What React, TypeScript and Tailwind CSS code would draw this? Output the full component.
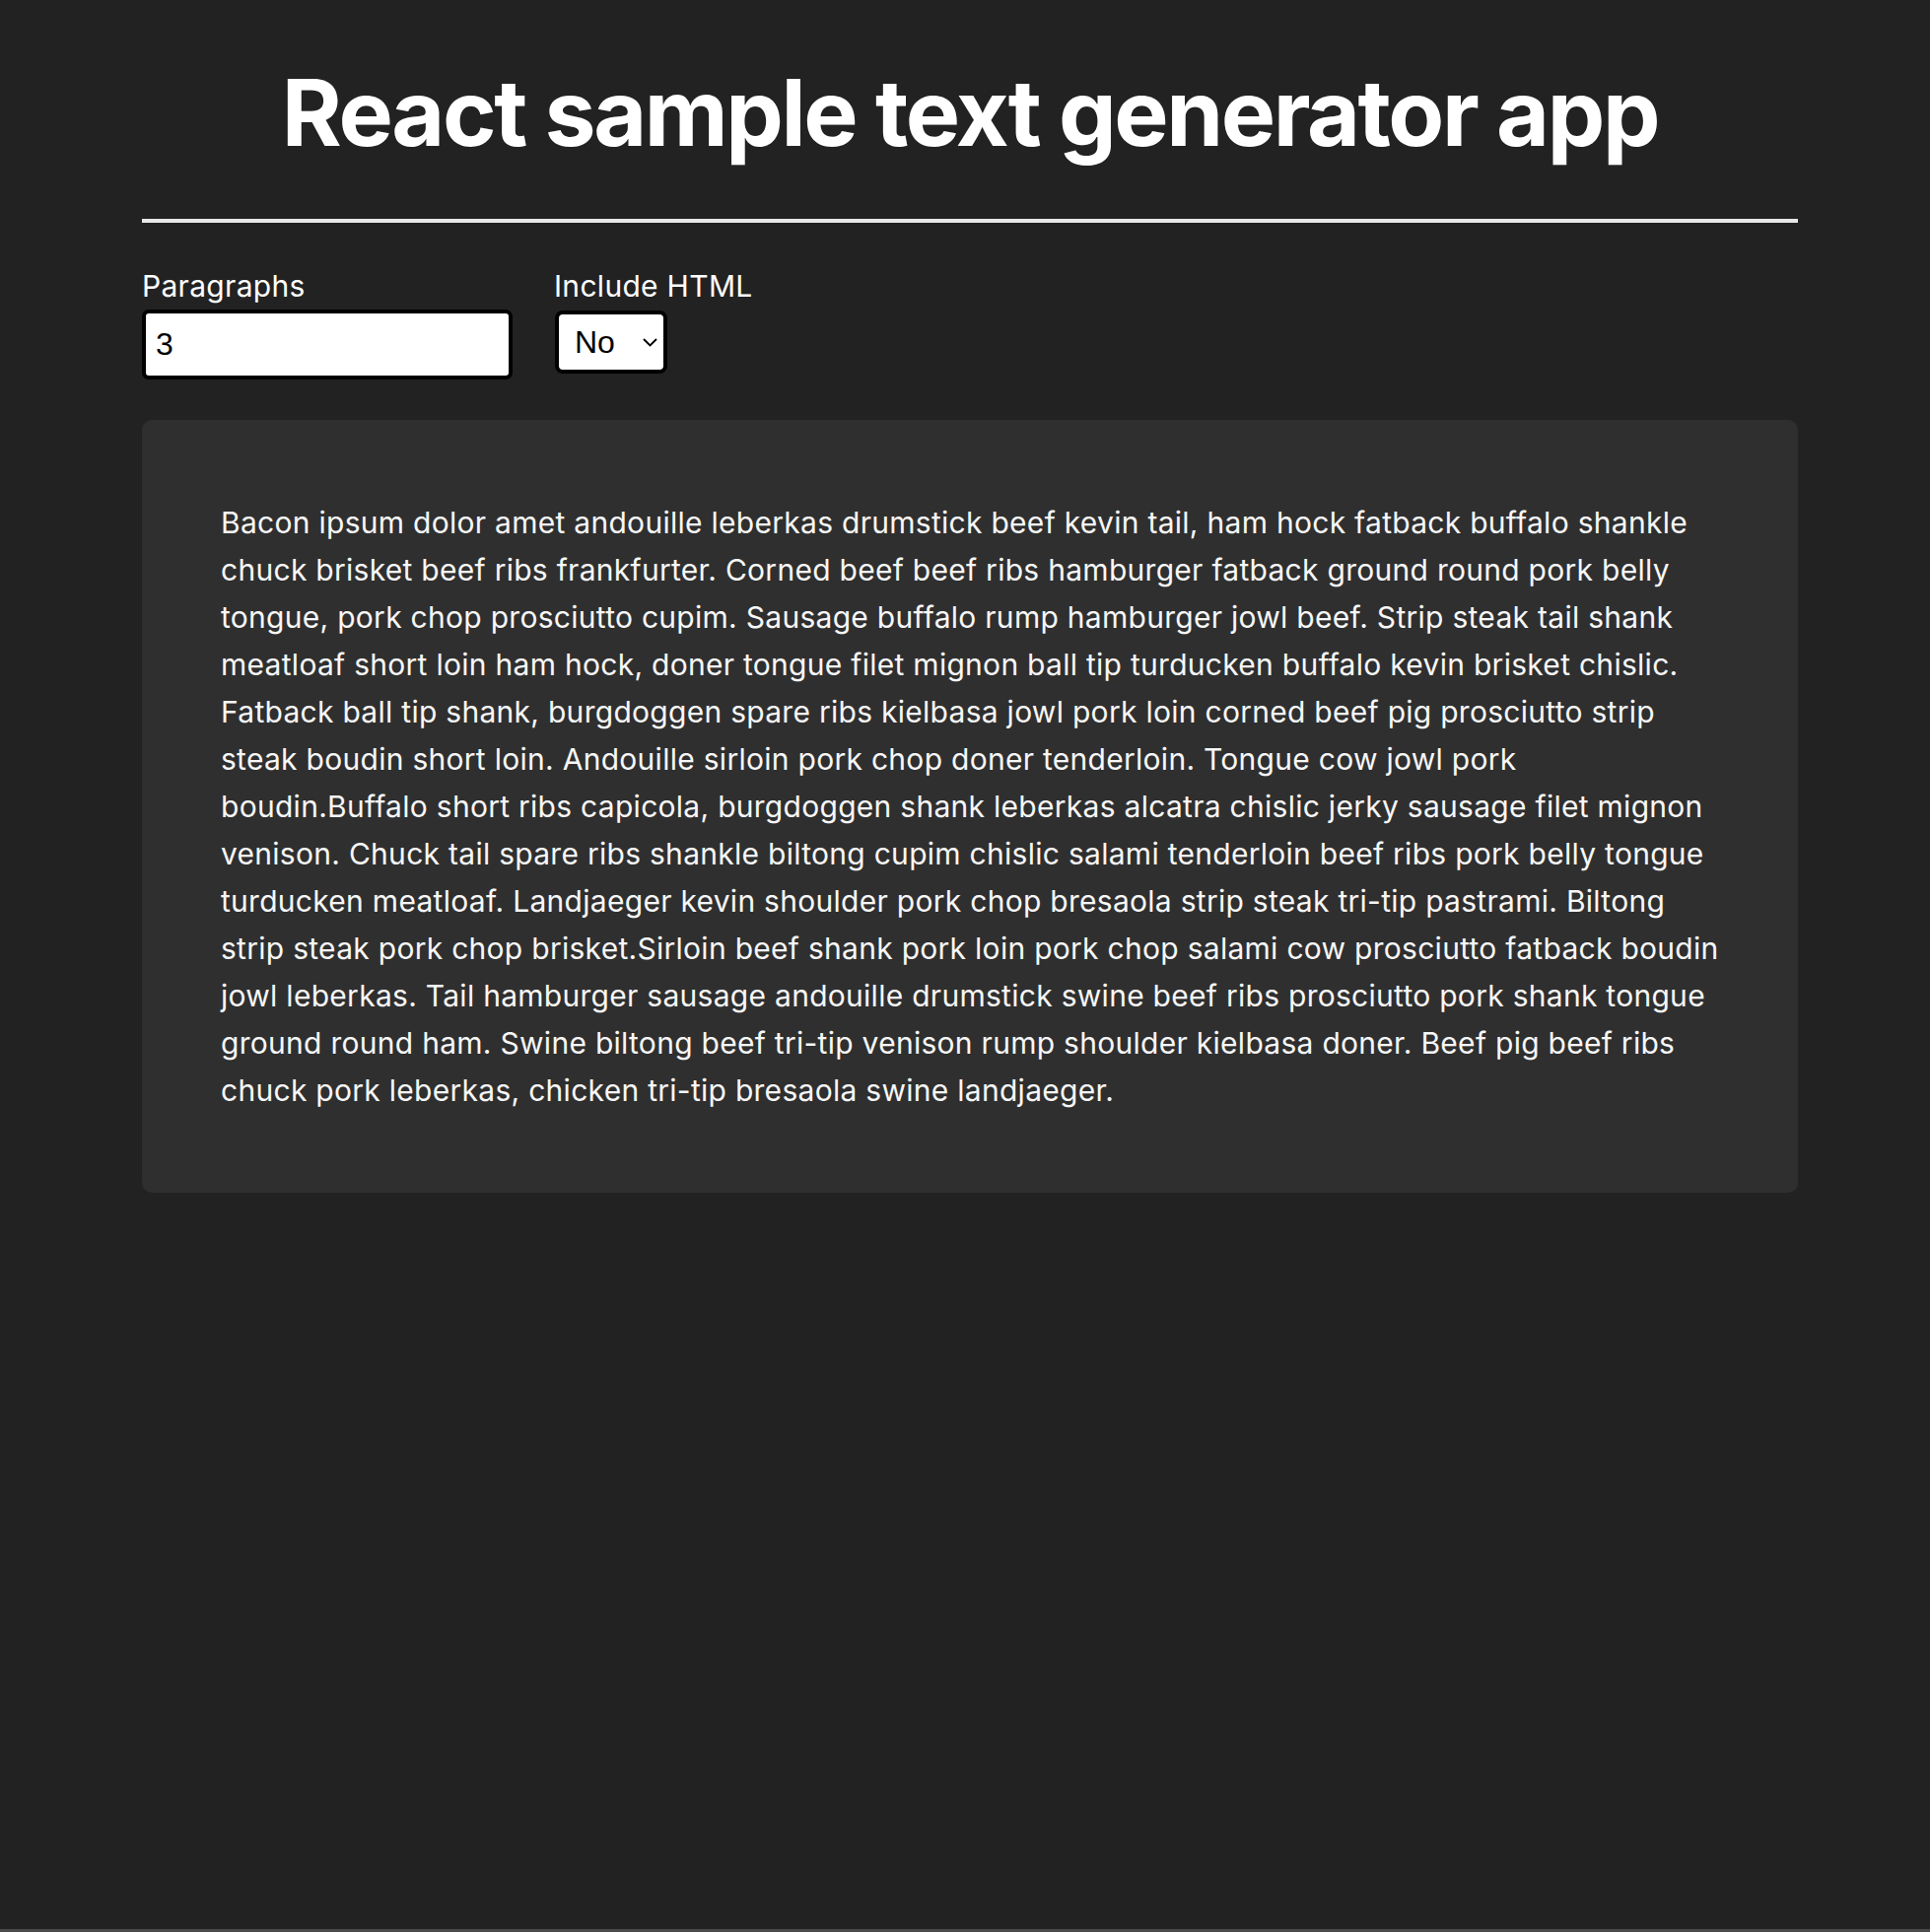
import { useState } from "react";

const LINES = [
  "Bacon ipsum dolor amet andouille leberkas drumstick beef kevin tail, ham hock fatback buffalo shankle",
  "chuck brisket beef ribs frankfurter. Corned beef beef ribs hamburger fatback ground round pork belly",
  "tongue, pork chop prosciutto cupim. Sausage buffalo rump hamburger jowl beef. Strip steak tail shank",
  "meatloaf short loin ham hock, doner tongue filet mignon ball tip turducken buffalo kevin brisket chislic.",
  "Fatback ball tip shank, burgdoggen spare ribs kielbasa jowl pork loin corned beef pig prosciutto strip",
  "steak boudin short loin. Andouille sirloin pork chop doner tenderloin. Tongue cow jowl pork",
  "boudin.Buffalo short ribs capicola, burgdoggen shank leberkas alcatra chislic jerky sausage filet mignon",
  "venison. Chuck tail spare ribs shankle biltong cupim chislic salami tenderloin beef ribs pork belly tongue",
  "turducken meatloaf. Landjaeger kevin shoulder pork chop bresaola strip steak tri-tip pastrami. Biltong",
  "strip steak pork chop brisket.Sirloin beef shank pork loin pork chop salami cow prosciutto fatback boudin",
  "jowl leberkas. Tail hamburger sausage andouille drumstick swine beef ribs prosciutto pork shank tongue",
  "ground round ham. Swine biltong beef tri-tip venison rump shoulder kielbasa doner. Beef pig beef ribs",
  "chuck pork leberkas, chicken tri-tip bresaola swine landjaeger.",
];

export default function App() {
  const [count, setCount] = useState("3");
  const [html, setHtml] = useState("no");

  return (
    <div className="h-[1960px] bg-[#222222] border-b-[3px] border-[#4b4b4b] text-white font-['Inter','Noto_Sans',sans-serif] overflow-hidden">
      <div className="ml-[144px] w-[1680px]">
        <h1 className="pt-[68px] text-[93px] leading-none font-bold text-center tracking-[-2.4px]">
          React sample text generator app
        </h1>
        <hr className="mt-[61px] border-0 h-[4px] bg-[#e8e8e8]" />

        <form className="mt-[46px] flex items-start gap-[43px]">
          <div className="flex flex-col">
            <label htmlFor="paragraphs" className="text-[30px] leading-[36px] tracking-[0.3px] mb-[6px]">
              Paragraphs
            </label>
            <input
              id="paragraphs"
              type="text"
              value={count}
              onChange={(e) => setCount(e.target.value)}
              className="w-[376px] h-[71px] bg-white text-black border-[4px] border-black rounded-[7px] pl-[10px] text-[32px] font-['Liberation_Sans',Arial,sans-serif] outline-none"
            />
          </div>
          <div className="flex flex-col">
            <label htmlFor="html" className="text-[30px] leading-[36px] tracking-[0.3px] -ml-[1px] mb-[7px]">
              Include HTML
            </label>
            <div className="relative w-[114px] h-[64px]">
              <select
                id="html"
                value={html}
                onChange={(e) => setHtml(e.target.value)}
                className="appearance-none w-full h-full bg-white text-black border-[4px] border-black rounded-[8px] pl-[16px] text-[32px] font-['Liberation_Sans',Arial,sans-serif] outline-none"
              >
                <option value="no">No</option>
                <option value="yes">Yes</option>
              </select>
              <svg
                className="absolute right-[10px] top-[28px] pointer-events-none"
                width="15"
                height="9"
                viewBox="0 0 15 9"
                fill="none"
              >
                <path d="M1 1l6.5 6.5L14 1" stroke="black" strokeWidth="1.8" />
              </svg>
            </div>
          </div>
        </form>

        <div className="mt-[41px] bg-[#2f2f2f] rounded-[10px] p-[80px] text-[30px] leading-[48px] tracking-[0.28px] text-[#f7f7f7]">
          <p>
            {LINES.map((line, i) => (
              <span key={i} className="block whitespace-nowrap">
                {line}
              </span>
            ))}
          </p>
        </div>
      </div>
    </div>
  );
}
